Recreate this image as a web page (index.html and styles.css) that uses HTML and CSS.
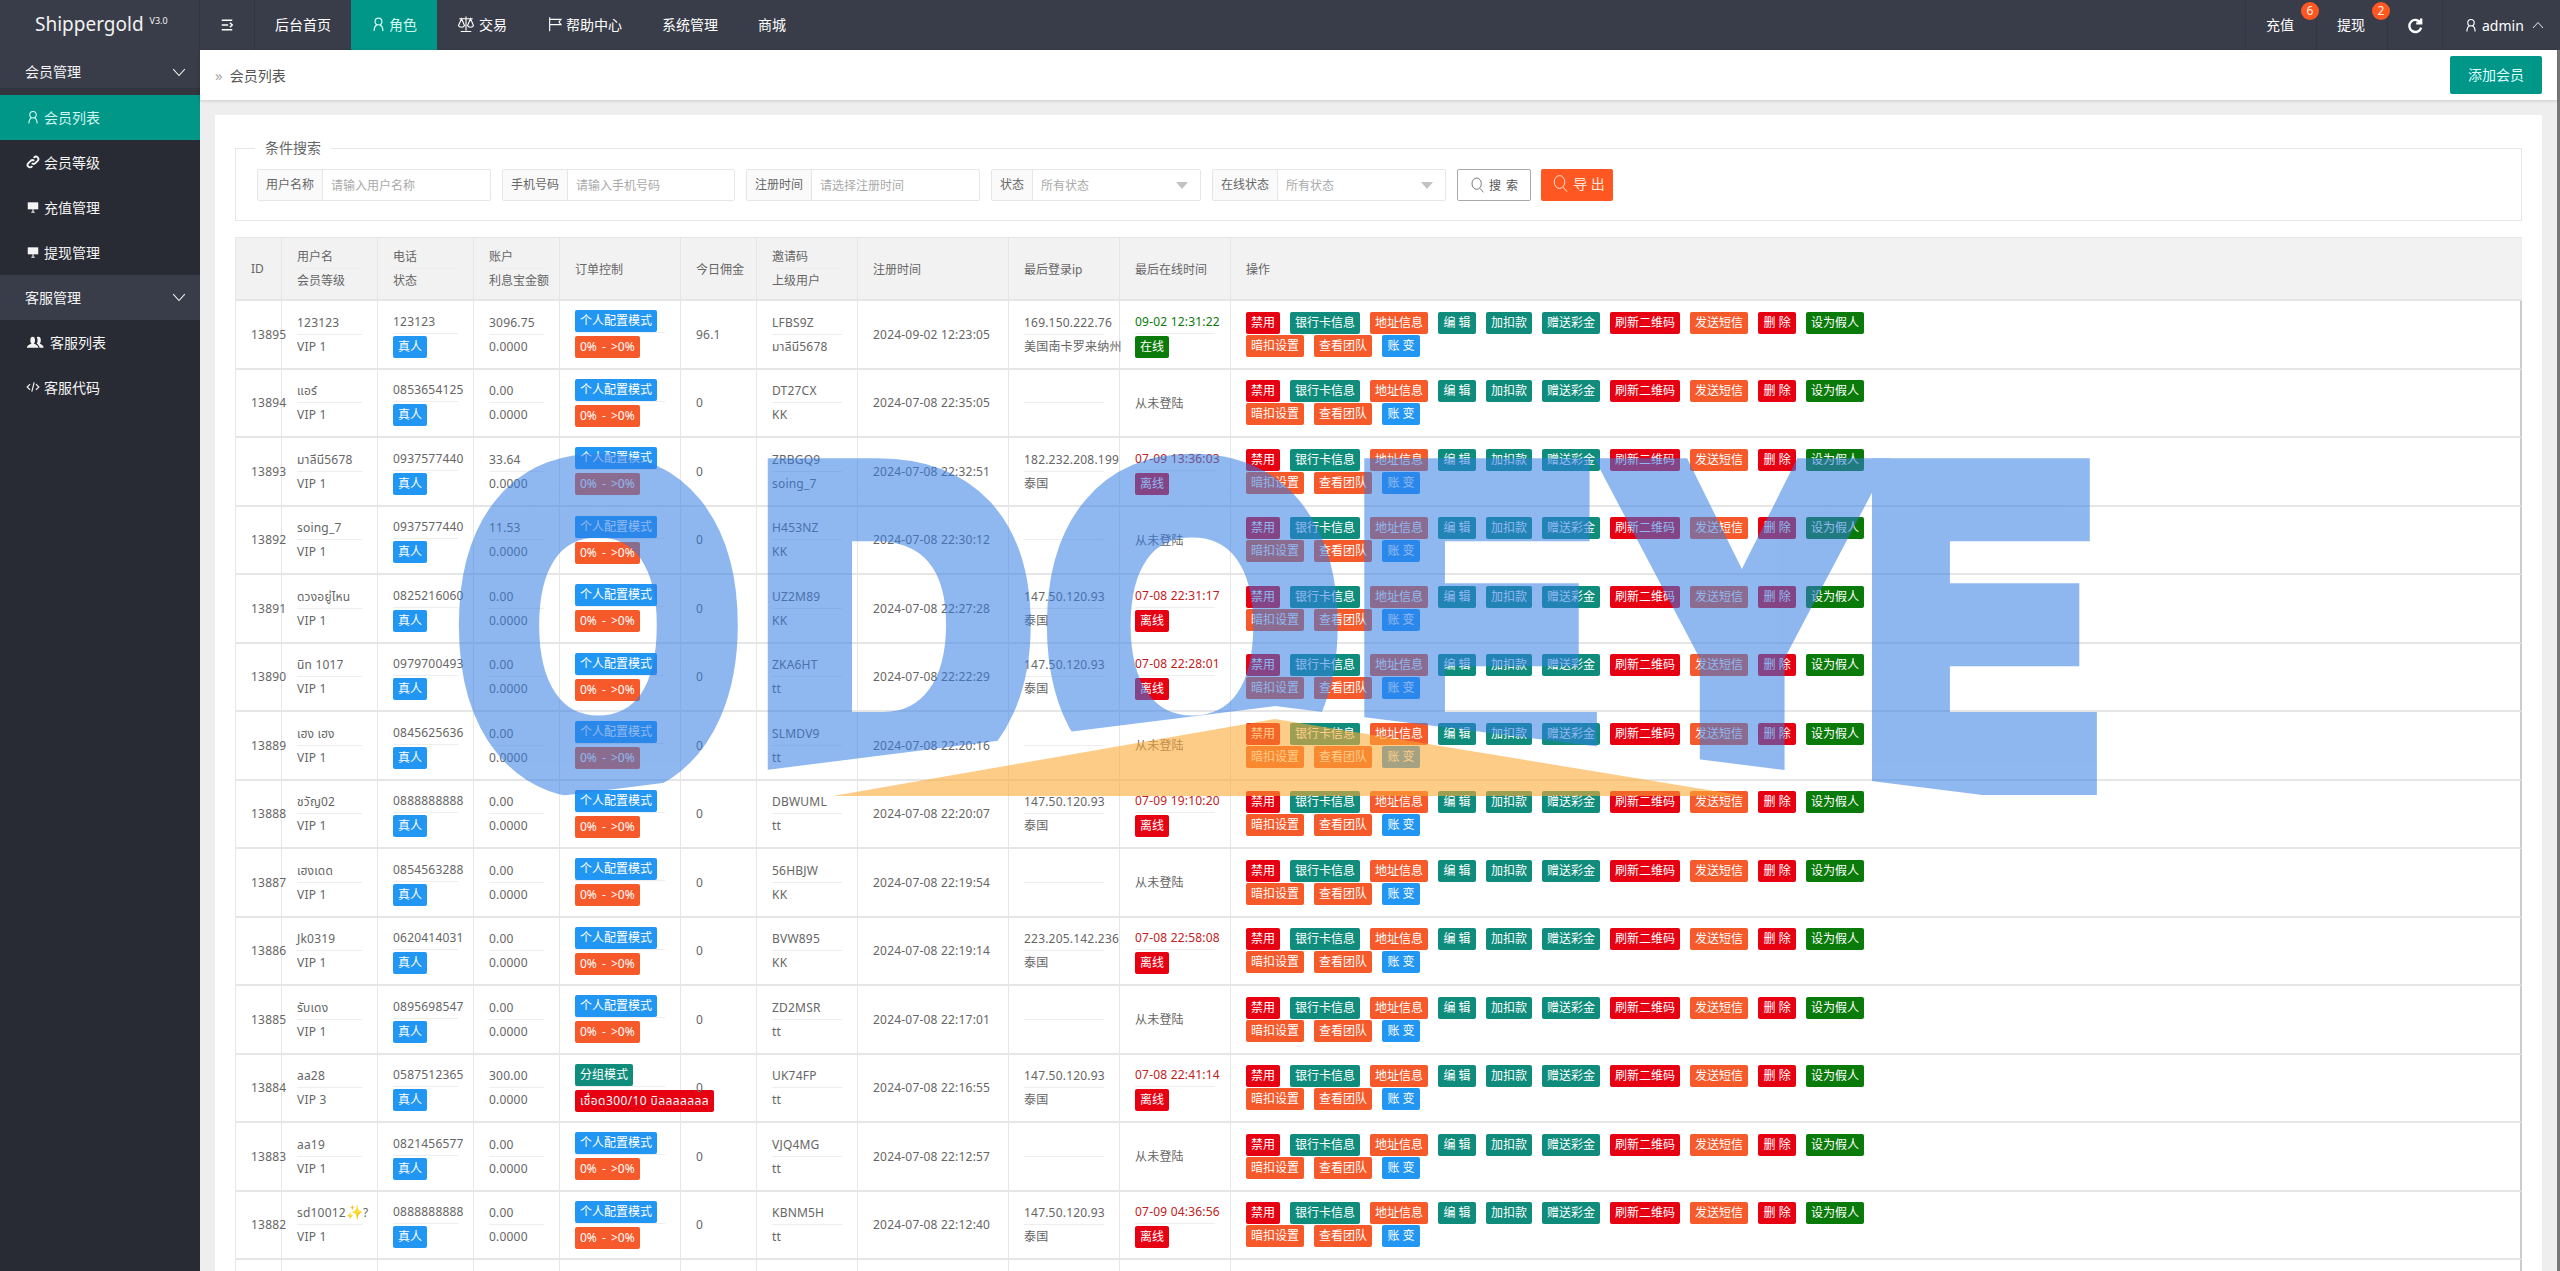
FILE: index.html
```html
<!DOCTYPE html>
<html lang="zh">
<head>
<meta charset="utf-8">
<title>会员列表</title>
<link rel="stylesheet" href="styles.css">
</head>
<body>
<svg class="defs" aria-hidden="true">
<symbol id="user" viewBox="0 0 24 24"><circle cx="12" cy="8" r="5.5"/><path d="M5 23c0-5 1-8 5-10M19 23c0-5-1-8-5-10"/></symbol>
<symbol id="scale" viewBox="0 0 24 24"><path d="M12 2v19M5 22h14M3 5h18M6 5l-4 9c1 3 7 3 8 0zM18 5l-4 9c1 3 7 3 8 0z"/></symbol>
<symbol id="flag" viewBox="0 0 24 24"><path d="M4 2v21M4 5h17l-3 4 3 4H4"/></symbol>
<symbol id="chev" viewBox="0 0 24 24"><path d="M2 7l10 11L22 7"/></symbol>
<symbol id="up" viewBox="0 0 24 24"><path d="M2 18L12 7l10 11"/></symbol>
<symbol id="refresh" viewBox="0 0 24 24"><path d="M19 8a8.5 8.5 0 1 0 1 7M20 2v7h-7"/></symbol>
<symbol id="link" viewBox="0 0 24 24"><path d="M10 14a4 4 0 0 0 6 0l4-4a4 4 0 0 0-6-6l-1 1M14 10a4 4 0 0 0-6 0l-4 4a4 4 0 0 0 6 6l1-1"/></symbol>
<symbol id="mon" viewBox="0 0 24 24"><path class="fl" d="M3 4h18v12H3z"/><path d="M12 16v5M9 21h6"/></symbol>
<symbol id="users" viewBox="0 0 30 24"><path class="fl" d="M11 3c3 0 4 3 4 6s-1 5-2 6c3 1 7 2 8 7H1c1-5 5-6 8-7-1-1-2-3-2-6s1-6 4-6zM21 3c3 0 4 3 4 6s-1 5-2 6c3 1 6 2 7 7h-7c-1-4-3-6-5-7 2-3 2-8 0-11 1-1 2-1 3-1z"/></symbol>
<symbol id="code" viewBox="0 0 24 24"><path d="M7 7l-5 5 5 5M17 7l5 5-5 5M14 4l-4 16"/></symbol>
<symbol id="search" viewBox="0 0 24 24"><ellipse cx="10" cy="10" rx="7" ry="8.5"/><path d="M15 17l5 6"/></symbol>
<symbol id="menu" viewBox="0 0 24 24"><path d="M3 4h18M3 12h11M3 20h18M17 8l4 4-4 4"/></symbol>
</svg>

<header class="top">
  <div class="logo">Shippergold <sup>V3.0</sup></div>
  <a class="tg"><svg class="ic"><use href="#menu"/></svg></a>
  <nav class="nav">
    <a>后台首页</a>
    <a class="on"><svg class="ic iu"><use href="#user"/></svg>角色</a>
    <a><svg class="ic is"><use href="#scale"/></svg>交易</a>
    <a><svg class="ic if"><use href="#flag"/></svg>帮助中心</a>
    <a>系统管理</a>
    <a>商城</a>
  </nav>
  <div class="right">
    <a class="rt">充值<em>6</em></a>
    <a class="rt">提现<em>2</em></a>
    <a class="rf"><svg class="ic big"><use href="#refresh"/></svg></a>
    <a class="me"><svg class="ic"><use href="#user"/></svg>admin<svg class="ic sm"><use href="#up"/></svg></a>
  </div>
</header>

<div class="wrap">
  <aside class="side">
    <a class="grp first">会员管理<svg class="ic ch"><use href="#chev"/></svg></a>
    <a class="it on"><svg class="ic"><use href="#user"/></svg>会员列表</a>
    <a class="it"><svg class="ic thick"><use href="#link"/></svg>会员等级</a>
    <a class="it"><svg class="ic"><use href="#mon"/></svg>充值管理</a>
    <a class="it"><svg class="ic"><use href="#mon"/></svg>提现管理</a>
    <a class="grp">客服管理<svg class="ic ch"><use href="#chev"/></svg></a>
    <a class="it"><svg class="ic wide"><use href="#users"/></svg>客服列表</a>
    <a class="it"><svg class="ic"><use href="#code"/></svg>客服代码</a>
  </aside>

  <main class="main">
    <div class="crumb">
      <div class="path"><span class="gt">»</span>会员列表</div>
      <a class="addb">添加会员</a>
    </div>
    <section class="card">
      <fieldset class="fs">
        <legend>条件搜索</legend>
        <div class="filters">
          <div class="fg g1"><label>用户名称</label><span class="ph">请输入用户名称</span></div>
          <div class="fg g2"><label>手机号码</label><span class="ph">请输入手机号码</span></div>
          <div class="fg g1"><label>注册时间</label><span class="ph">请选择注册时间</span></div>
          <div class="fg g3"><label>状态</label><span class="ph">所有状态</span><i class="tri"></i></div>
          <div class="fg g1"><label>在线状态</label><span class="ph">所有状态</span><i class="tri"></i></div>
          <a class="sbtn"><svg class="ic"><use href="#search"/></svg>搜 索</a>
          <a class="xbtn"><svg class="ic"><use href="#search"/></svg>导 出</a>
        </div>
      </fieldset>
      <table class="tb">
        <colgroup><col class="c1"><col class="c2"><col class="c2"><col class="c4"><col class="c5"><col class="c6"><col class="c7"><col class="c8"><col class="c9"><col class="c9"><col></colgroup>
        <thead><tr>
          <th>ID</th><th><p class="l">用户名</p><p>会员等级</p></th><th><p class="l">电话</p><p>状态</p></th><th><p class="l">账户</p><p>利息宝金额</p></th><th>订单控制</th><th>今日佣金</th><th><p class="l">邀请码</p><p>上级用户</p></th><th>注册时间</th><th>最后登录ip</th><th>最后在线时间</th><th>操作</th>
        </tr></thead>
        <tbody>
<tr><td>13895</td><td><p class="l">123123</p><p>VIP 1</p></td><td><p class="l t">123123</p><a class="b u">真人</a></td><td><p class="l">3096.75</p><p>0.0000</p></td><td><p class="l m"><a class="b u">个人配置模式</a></p><a class="b o">0% - &gt;0%</a></td><td>96.1</td><td><p class="l">LFBS9Z</p><p>มาลีนี5678</p></td><td>2024-09-02 12:23:05</td><td><p class="l">169.150.222.76</p><p>美国南卡罗来纳州</p></td><td><p class="l t gn">09-02 12:31:22</p><a class="b g">在线</a></td><td><div class="ops"><a class="b r">禁用</a><a class="b e">银行卡信息</a><a class="b o">地址信息</a><a class="b e w">编 辑</a><a class="b e">加扣款</a><a class="b e">赠送彩金</a><a class="b r">刷新二维码</a><a class="b o">发送短信</a><a class="b r w">删 除</a><a class="b g">设为假人</a></div><div class="ops"><a class="b o">暗扣设置</a><a class="b o">查看团队</a><a class="b u w">账 变</a></div></td></tr>
<tr><td>13894</td><td><p class="l">แอร์</p><p>VIP 1</p></td><td><p class="l t">0853654125</p><a class="b u">真人</a></td><td><p class="l">0.00</p><p>0.0000</p></td><td><p class="l m"><a class="b u">个人配置模式</a></p><a class="b o">0% - &gt;0%</a></td><td>0</td><td><p class="l">DT27CX</p><p>KK</p></td><td>2024-07-08 22:35:05</td><td><p class="l e0"></p><p class="e0"></p></td><td>从未登陆</td><td><div class="ops"><a class="b r">禁用</a><a class="b e">银行卡信息</a><a class="b o">地址信息</a><a class="b e w">编 辑</a><a class="b e">加扣款</a><a class="b e">赠送彩金</a><a class="b r">刷新二维码</a><a class="b o">发送短信</a><a class="b r w">删 除</a><a class="b g">设为假人</a></div><div class="ops"><a class="b o">暗扣设置</a><a class="b o">查看团队</a><a class="b u w">账 变</a></div></td></tr>
<tr><td>13893</td><td><p class="l">มาลีนี5678</p><p>VIP 1</p></td><td><p class="l t">0937577440</p><a class="b u">真人</a></td><td><p class="l">33.64</p><p>0.0000</p></td><td><p class="l m"><a class="b u">个人配置模式</a></p><a class="b o">0% - &gt;0%</a></td><td>0</td><td><p class="l">ZRBGQ9</p><p>soing_7</p></td><td>2024-07-08 22:32:51</td><td><p class="l">182.232.208.199</p><p>泰国</p></td><td><p class="l t rd">07-09 13:36:03</p><a class="b r">离线</a></td><td><div class="ops"><a class="b r">禁用</a><a class="b e">银行卡信息</a><a class="b o">地址信息</a><a class="b e w">编 辑</a><a class="b e">加扣款</a><a class="b e">赠送彩金</a><a class="b r">刷新二维码</a><a class="b o">发送短信</a><a class="b r w">删 除</a><a class="b g">设为假人</a></div><div class="ops"><a class="b o">暗扣设置</a><a class="b o">查看团队</a><a class="b u w">账 变</a></div></td></tr>
<tr><td>13892</td><td><p class="l">soing_7</p><p>VIP 1</p></td><td><p class="l t">0937577440</p><a class="b u">真人</a></td><td><p class="l">11.53</p><p>0.0000</p></td><td><p class="l m"><a class="b u">个人配置模式</a></p><a class="b o">0% - &gt;0%</a></td><td>0</td><td><p class="l">H453NZ</p><p>KK</p></td><td>2024-07-08 22:30:12</td><td><p class="l e0"></p><p class="e0"></p></td><td>从未登陆</td><td><div class="ops"><a class="b r">禁用</a><a class="b e">银行卡信息</a><a class="b o">地址信息</a><a class="b e w">编 辑</a><a class="b e">加扣款</a><a class="b e">赠送彩金</a><a class="b r">刷新二维码</a><a class="b o">发送短信</a><a class="b r w">删 除</a><a class="b g">设为假人</a></div><div class="ops"><a class="b o">暗扣设置</a><a class="b o">查看团队</a><a class="b u w">账 变</a></div></td></tr>
<tr><td>13891</td><td><p class="l">ดวงอยู่ไหน</p><p>VIP 1</p></td><td><p class="l t">0825216060</p><a class="b u">真人</a></td><td><p class="l">0.00</p><p>0.0000</p></td><td><p class="l m"><a class="b u">个人配置模式</a></p><a class="b o">0% - &gt;0%</a></td><td>0</td><td><p class="l">UZ2M89</p><p>KK</p></td><td>2024-07-08 22:27:28</td><td><p class="l">147.50.120.93</p><p>泰国</p></td><td><p class="l t rd">07-08 22:31:17</p><a class="b r">离线</a></td><td><div class="ops"><a class="b r">禁用</a><a class="b e">银行卡信息</a><a class="b o">地址信息</a><a class="b e w">编 辑</a><a class="b e">加扣款</a><a class="b e">赠送彩金</a><a class="b r">刷新二维码</a><a class="b o">发送短信</a><a class="b r w">删 除</a><a class="b g">设为假人</a></div><div class="ops"><a class="b o">暗扣设置</a><a class="b o">查看团队</a><a class="b u w">账 变</a></div></td></tr>
<tr><td>13890</td><td><p class="l">นิท 1017</p><p>VIP 1</p></td><td><p class="l t">0979700493</p><a class="b u">真人</a></td><td><p class="l">0.00</p><p>0.0000</p></td><td><p class="l m"><a class="b u">个人配置模式</a></p><a class="b o">0% - &gt;0%</a></td><td>0</td><td><p class="l">ZKA6HT</p><p>tt</p></td><td>2024-07-08 22:22:29</td><td><p class="l">147.50.120.93</p><p>泰国</p></td><td><p class="l t rd">07-08 22:28:01</p><a class="b r">离线</a></td><td><div class="ops"><a class="b r">禁用</a><a class="b e">银行卡信息</a><a class="b o">地址信息</a><a class="b e w">编 辑</a><a class="b e">加扣款</a><a class="b e">赠送彩金</a><a class="b r">刷新二维码</a><a class="b o">发送短信</a><a class="b r w">删 除</a><a class="b g">设为假人</a></div><div class="ops"><a class="b o">暗扣设置</a><a class="b o">查看团队</a><a class="b u w">账 变</a></div></td></tr>
<tr><td>13889</td><td><p class="l">เฮง เฮง</p><p>VIP 1</p></td><td><p class="l t">0845625636</p><a class="b u">真人</a></td><td><p class="l">0.00</p><p>0.0000</p></td><td><p class="l m"><a class="b u">个人配置模式</a></p><a class="b o">0% - &gt;0%</a></td><td>0</td><td><p class="l">SLMDV9</p><p>tt</p></td><td>2024-07-08 22:20:16</td><td><p class="l e0"></p><p class="e0"></p></td><td>从未登陆</td><td><div class="ops"><a class="b r">禁用</a><a class="b e">银行卡信息</a><a class="b o">地址信息</a><a class="b e w">编 辑</a><a class="b e">加扣款</a><a class="b e">赠送彩金</a><a class="b r">刷新二维码</a><a class="b o">发送短信</a><a class="b r w">删 除</a><a class="b g">设为假人</a></div><div class="ops"><a class="b o">暗扣设置</a><a class="b o">查看团队</a><a class="b u w">账 变</a></div></td></tr>
<tr><td>13888</td><td><p class="l">ชวัญ02</p><p>VIP 1</p></td><td><p class="l t">0888888888</p><a class="b u">真人</a></td><td><p class="l">0.00</p><p>0.0000</p></td><td><p class="l m"><a class="b u">个人配置模式</a></p><a class="b o">0% - &gt;0%</a></td><td>0</td><td><p class="l">DBWUML</p><p>tt</p></td><td>2024-07-08 22:20:07</td><td><p class="l">147.50.120.93</p><p>泰国</p></td><td><p class="l t rd">07-09 19:10:20</p><a class="b r">离线</a></td><td><div class="ops"><a class="b r">禁用</a><a class="b e">银行卡信息</a><a class="b o">地址信息</a><a class="b e w">编 辑</a><a class="b e">加扣款</a><a class="b e">赠送彩金</a><a class="b r">刷新二维码</a><a class="b o">发送短信</a><a class="b r w">删 除</a><a class="b g">设为假人</a></div><div class="ops"><a class="b o">暗扣设置</a><a class="b o">查看团队</a><a class="b u w">账 变</a></div></td></tr>
<tr><td>13887</td><td><p class="l">เฮงเดด</p><p>VIP 1</p></td><td><p class="l t">0854563288</p><a class="b u">真人</a></td><td><p class="l">0.00</p><p>0.0000</p></td><td><p class="l m"><a class="b u">个人配置模式</a></p><a class="b o">0% - &gt;0%</a></td><td>0</td><td><p class="l">56HBJW</p><p>KK</p></td><td>2024-07-08 22:19:54</td><td><p class="l e0"></p><p class="e0"></p></td><td>从未登陆</td><td><div class="ops"><a class="b r">禁用</a><a class="b e">银行卡信息</a><a class="b o">地址信息</a><a class="b e w">编 辑</a><a class="b e">加扣款</a><a class="b e">赠送彩金</a><a class="b r">刷新二维码</a><a class="b o">发送短信</a><a class="b r w">删 除</a><a class="b g">设为假人</a></div><div class="ops"><a class="b o">暗扣设置</a><a class="b o">查看团队</a><a class="b u w">账 变</a></div></td></tr>
<tr><td>13886</td><td><p class="l">Jk0319</p><p>VIP 1</p></td><td><p class="l t">0620414031</p><a class="b u">真人</a></td><td><p class="l">0.00</p><p>0.0000</p></td><td><p class="l m"><a class="b u">个人配置模式</a></p><a class="b o">0% - &gt;0%</a></td><td>0</td><td><p class="l">BVW895</p><p>KK</p></td><td>2024-07-08 22:19:14</td><td><p class="l">223.205.142.236</p><p>泰国</p></td><td><p class="l t rd">07-08 22:58:08</p><a class="b r">离线</a></td><td><div class="ops"><a class="b r">禁用</a><a class="b e">银行卡信息</a><a class="b o">地址信息</a><a class="b e w">编 辑</a><a class="b e">加扣款</a><a class="b e">赠送彩金</a><a class="b r">刷新二维码</a><a class="b o">发送短信</a><a class="b r w">删 除</a><a class="b g">设为假人</a></div><div class="ops"><a class="b o">暗扣设置</a><a class="b o">查看团队</a><a class="b u w">账 变</a></div></td></tr>
<tr><td>13885</td><td><p class="l">รับเดง</p><p>VIP 1</p></td><td><p class="l t">0895698547</p><a class="b u">真人</a></td><td><p class="l">0.00</p><p>0.0000</p></td><td><p class="l m"><a class="b u">个人配置模式</a></p><a class="b o">0% - &gt;0%</a></td><td>0</td><td><p class="l">ZD2MSR</p><p>tt</p></td><td>2024-07-08 22:17:01</td><td><p class="l e0"></p><p class="e0"></p></td><td>从未登陆</td><td><div class="ops"><a class="b r">禁用</a><a class="b e">银行卡信息</a><a class="b o">地址信息</a><a class="b e w">编 辑</a><a class="b e">加扣款</a><a class="b e">赠送彩金</a><a class="b r">刷新二维码</a><a class="b o">发送短信</a><a class="b r w">删 除</a><a class="b g">设为假人</a></div><div class="ops"><a class="b o">暗扣设置</a><a class="b o">查看团队</a><a class="b u w">账 变</a></div></td></tr>
<tr><td>13884</td><td><p class="l">aa28</p><p>VIP 3</p></td><td><p class="l t">0587512365</p><a class="b u">真人</a></td><td><p class="l">300.00</p><p>0.0000</p></td><td><p class="l m"><a class="b e">分组模式</a></p><a class="b r">เชื่อด300/10 บิลลลลลลล</a></td><td>0</td><td><p class="l">UK74FP</p><p>tt</p></td><td>2024-07-08 22:16:55</td><td><p class="l">147.50.120.93</p><p>泰国</p></td><td><p class="l t rd">07-08 22:41:14</p><a class="b r">离线</a></td><td><div class="ops"><a class="b r">禁用</a><a class="b e">银行卡信息</a><a class="b o">地址信息</a><a class="b e w">编 辑</a><a class="b e">加扣款</a><a class="b e">赠送彩金</a><a class="b r">刷新二维码</a><a class="b o">发送短信</a><a class="b r w">删 除</a><a class="b g">设为假人</a></div><div class="ops"><a class="b o">暗扣设置</a><a class="b o">查看团队</a><a class="b u w">账 变</a></div></td></tr>
<tr><td>13883</td><td><p class="l">aa19</p><p>VIP 1</p></td><td><p class="l t">0821456577</p><a class="b u">真人</a></td><td><p class="l">0.00</p><p>0.0000</p></td><td><p class="l m"><a class="b u">个人配置模式</a></p><a class="b o">0% - &gt;0%</a></td><td>0</td><td><p class="l">VJQ4MG</p><p>tt</p></td><td>2024-07-08 22:12:57</td><td><p class="l e0"></p><p class="e0"></p></td><td>从未登陆</td><td><div class="ops"><a class="b r">禁用</a><a class="b e">银行卡信息</a><a class="b o">地址信息</a><a class="b e w">编 辑</a><a class="b e">加扣款</a><a class="b e">赠送彩金</a><a class="b r">刷新二维码</a><a class="b o">发送短信</a><a class="b r w">删 除</a><a class="b g">设为假人</a></div><div class="ops"><a class="b o">暗扣设置</a><a class="b o">查看团队</a><a class="b u w">账 变</a></div></td></tr>
<tr><td>13882</td><td><p class="l">sd10012<span class="spk">✨</span>?</p><p>VIP 1</p></td><td><p class="l t">0888888888</p><a class="b u">真人</a></td><td><p class="l">0.00</p><p>0.0000</p></td><td><p class="l m"><a class="b u">个人配置模式</a></p><a class="b o">0% - &gt;0%</a></td><td>0</td><td><p class="l">KBNM5H</p><p>tt</p></td><td>2024-07-08 22:12:40</td><td><p class="l">147.50.120.93</p><p>泰国</p></td><td><p class="l t rd">07-09 04:36:56</p><a class="b r">离线</a></td><td><div class="ops"><a class="b r">禁用</a><a class="b e">银行卡信息</a><a class="b o">地址信息</a><a class="b e w">编 辑</a><a class="b e">加扣款</a><a class="b e">赠送彩金</a><a class="b r">刷新二维码</a><a class="b o">发送短信</a><a class="b r w">删 除</a><a class="b g">设为假人</a></div><div class="ops"><a class="b o">暗扣设置</a><a class="b o">查看团队</a><a class="b u w">账 变</a></div></td></tr>
<tr><td></td><td></td><td></td><td></td><td><p class="l m"><a class="b u">个人配置模式</a></p></td><td></td><td></td><td></td><td></td><td></td><td></td></tr>
        </tbody>
      </table>
    </section>
  </main>
  <div class="sb"></div>
</div>

<svg class="mark" width="2560" height="1271" aria-hidden="true">
  <defs><clipPath id="cut"><polygon points="400,440 2150,440 2150,816 1275,706 400,816"/></clipPath></defs>
  <g class="ltrs" clip-path="url(#cut)">
    <text x="458" y="778" textLength="281" lengthAdjust="spacingAndGlyphs">O</text>
    <text x="757" y="778" textLength="275" lengthAdjust="spacingAndGlyphs">D</text>
    <text x="1046" y="778" textLength="293" lengthAdjust="spacingAndGlyphs">O</text>
    <text x="1354" y="778" textLength="243" lengthAdjust="spacingAndGlyphs">E</text>
    <text x="1614" y="778" textLength="256" lengthAdjust="spacingAndGlyphs">Y</text>
    <text x="1862" y="778" textLength="235" lengthAdjust="spacingAndGlyphs">E</text>
  </g>
  <polygon class="tri2" points="833,796 1275,719 1745,796"/>
</svg>
</body>
</html>
```
FILE: styles.css
```css
*{box-sizing:border-box}
html,body{margin:0;height:1271px;overflow:hidden}
body{font-family:"Noto Sans","Noto Sans CJK SC","Noto Sans Thai","DejaVu Sans",sans-serif;font-size:12px;color:#666;background:#eee;position:relative}
p{margin:0}
a{text-decoration:none;color:inherit}
.defs{position:absolute;width:0;height:0}
.ic{width:14px;height:14px;fill:none;stroke:currentColor;stroke-width:2;flex:none}
.fl{fill:currentColor;stroke:none}

.top{display:flex;height:50px;background:#393d49;color:#fff;font-size:14px}
.logo{width:200px;padding-left:35px;font-size:19px;line-height:48px;color:#f2f2f2;border-right:1px solid #33363f;white-space:nowrap}
.logo sup{font-size:9px;vertical-align:7px;line-height:0;margin-left:1px}
.tg{width:55px;display:flex;align-items:center;justify-content:center;border-right:1px solid #33363f}
.tg .ic{stroke-width:2.6}
.nav{display:flex}
.nav a{display:flex;align-items:center;padding:0 20px 2px;height:50px}
.nav a.on{background:#009688;color:#cff7ef}
.iu{width:15px;height:16px;margin-right:3px}
.is{width:18px;height:18px;margin-right:4px;stroke-width:1.5}
.if{width:16px;height:16px;margin-right:3px;stroke-width:1.7}
.right{margin-left:auto;display:flex}
.rt{width:71px;padding-left:20px;line-height:50px;border-left:1px solid #33363f;position:relative}
.rt em{position:absolute;left:55px;top:2px;width:18px;height:18px;border-radius:50%;background:#ff5722;font:normal 12px/18px "Noto Sans",sans-serif;text-align:center;color:#fff0e0;z-index:1}
.rf{width:55px;display:flex;align-items:center;justify-content:center;border-left:1px solid #33363f}
.big{width:17px;height:17px;stroke-width:3.4}
.me{width:118px;display:flex;align-items:center;gap:4px;padding-left:21px;border-left:1px solid #33363f}
.sm{width:12px;height:12px;margin-left:4px;stroke-width:1.8}

.wrap{display:flex;height:1221px}
.side{width:200px;background:#282b33;color:#f4f4f4;font-size:14px;flex:none}
.side a{display:flex;align-items:center;height:45px}
.grp{background:#393d49;padding:0 0 2px 25px;position:relative}
.grp.first{box-shadow:inset 0 -7px 0 #32353e;padding-bottom:3px}
.ch{position:absolute;left:172px;top:15px;stroke-width:1.8}
.it{padding:0 0 2px 26px;gap:4px}
.it.on{background:#009688;color:#cff7ef}
.thick{stroke-width:3.2}
.wide{width:18px;margin-right:2px}

.main{flex:1;min-width:0;background:#eee}
.sb{width:3px;background:#777}
.crumb{height:50px;background:#fff;display:flex;align-items:center;justify-content:space-between;padding:0 15px;box-shadow:0 1px 3px rgba(0,0,0,.15);position:relative}
.path{font-size:14px;color:#555;padding-bottom:1px}
.gt{color:#aaa;margin-right:7px;font-size:15px}
.addb{width:92px;height:38px;line-height:38px;text-align:center;background:#009688;color:#dff;font-size:14px;border-radius:2px}

.card{margin:15px 15px 0;background:#fff;padding:23px 20px 0}
.fs{margin:0;min-width:0;border:1px solid #e6e6e6;padding:11px 21px 19px}
.fs legend{margin-left:-2px;padding:0 10px;font-size:14px;line-height:20px;color:#666}
.filters{display:flex;gap:11px;height:32px}
.fg{display:flex;align-items:center;border:1px solid #e6e6e6;border-radius:2px;position:relative;background:#fff;flex:none}
.g1{width:234px}
.g2{width:233px}
.g3{width:210px}
.fg label{height:100%;line-height:30px;padding:0 8px;background:#fafafa;border-right:1px solid #e6e6e6;color:#666;white-space:nowrap}
.ph{padding-left:8px;color:#aaa}
.tri{position:absolute;right:12px;top:12px;border:6px solid transparent;border-top:7px solid #c2c2c2;border-bottom:0}
.sbtn,.xbtn{display:flex;align-items:center;justify-content:center;gap:3px;height:32px;border-radius:2px;flex:none}
.sbtn{width:74px;border:1px solid #aaa;color:#555;word-spacing:2px}
.sbtn .ic{width:16px;height:18px;stroke-width:1.2}
.xbtn .ic{width:18px;height:23px;stroke-width:1.3}
.xbtn{width:72px;margin-left:-1px;background:#ff5722;color:#ffe8dc;padding:0 0 4px 3px;font-size:14px}

.tb{margin-top:16px;width:2287px;table-layout:fixed;border-collapse:separate;border-spacing:0}
.c1{width:46px}
.c2{width:96px}
.c4{width:86px}
.c5{width:121px}
.c6{width:76px}
.c7{width:101px}
.c8{width:151px}
.c9{width:111px}
.tb th,.tb td{padding:0 15px;text-align:left;font-weight:400;white-space:nowrap;vertical-align:middle;border-left:1px solid #e6e6e6}
.tb th{height:64px;background:#f2f2f2;border-top:1px solid #e6e6e6;border-bottom:2px solid #e6e6e6}
.tb th:last-child{border-right:1px solid #eee}
.tb td{height:68.5px;border-bottom:2px solid #e6e6e6;letter-spacing:.2px}
.tb td:last-child{border-right:2px solid #ccc}
.tb p{line-height:23px;height:23px}
.tb p.l{border-bottom:1px solid #eee;height:24px}
.tb p.t{height:23px;line-height:22px;margin-bottom:2px}
.tb p.m{height:23px;line-height:0;margin-bottom:3px}
.tb td p.m .b{vertical-align:top}
.m+.b.o{word-spacing:2px}
.m+.b.r{letter-spacing:.4px}
.gn{color:#0a7a0a}
.rd{color:#c02020}
.spk{color:#f0c040;font-size:14px;line-height:1}

.b{display:inline-block;height:22px;line-height:22px;padding:0 5px;border-radius:2px;color:#fff;font-size:12px;letter-spacing:0;vertical-align:top;white-space:nowrap}
.b.r{background:#e60012}
.b.e{background:#0f8c7c}
.b.o{background:#f6592a}
.b.g{background:#0a7a0a}
.b.u{background:#2196f3}
.b.w{width:38px;padding:0;text-align:center}
.ops{display:flex;gap:10px;height:22px}
.ops+.ops{margin-top:1px}

.mark{position:absolute;left:0;top:0;pointer-events:none}
.ltrs{font:700 440px "Liberation Sans",sans-serif;fill:rgb(51,125,227);stroke:rgb(51,125,227);stroke-width:34px;opacity:.55}
.tri2{fill:rgba(252,170,55,.6)}
```
